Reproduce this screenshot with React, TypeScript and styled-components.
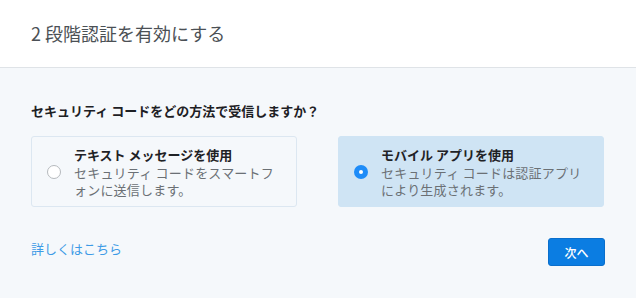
import React, { useState } from "react";
import styled, { createGlobalStyle } from "styled-components";

const GlobalStyle = createGlobalStyle`
    * {
        box-sizing: border-box;
    }

    html,
    body {
        margin: 0;
        padding: 0;
        background: #f5f8fb;
        font-family: "Noto Sans CJK JP", "Noto Sans", sans-serif;
    }
`;

const Dialog = styled.div`
    width: 636px;
    height: 298px;
    background: #f5f8fb;
    display: flex;
    flex-direction: column;
`;

const Header = styled.div`
    height: 68px;
    background: #ffffff;
    border-bottom: 1px solid #dfe3e7;
    display: flex;
    align-items: center;
    padding: 0 31px 1px;
`;

const Title = styled.h1`
    margin: 0;
    font-size: 18px;
    font-weight: 400;
    color: #4b5055;
    line-height: 24px;
`;

const Body = styled.div`
    padding: 34px 31px 0;
`;

const Question = styled.div`
    font-size: 13px;
    font-weight: 700;
    color: #1d2024;
    line-height: 18px;
`;

const Options = styled.div`
    display: grid;
    grid-template-columns: 266px 266px;
    column-gap: 41px;
    margin-top: 16px;
`;

const Option = styled.label<{ $active: boolean }>`
    display: flex;
    align-items: center;
    height: 71px;
    padding: 0 12px 0 15px;
    border-radius: 3px;
    border: 1px solid ${(p) => (p.$active ? "#cfe4f4" : "#dce7f1")};
    background: ${(p) => (p.$active ? "#cfe4f4" : "#f5f8fb")};
    cursor: pointer;
`;

const Radio = styled.span<{ $checked: boolean }>`
    flex: none;
    width: 14px;
    height: 14px;
    border-radius: 50%;
    border: ${(p) => (p.$checked ? "none" : "1px solid #b5b9bd")};
    background: ${(p) => (p.$checked ? "#1e8cf8" : "#ffffff")};
    display: flex;
    align-items: center;
    justify-content: center;
    margin-right: 13px;

    &::after {
        content: "";
        width: 4px;
        height: 4px;
        border-radius: 50%;
        background: #ffffff;
        display: ${(p) => (p.$checked ? "block" : "none")};
    }
`;

const OptionText = styled.div`
    width: 201px;
    line-break: loose;
`;

const OptionTitle = styled.div`
    font-size: 13px;
    font-weight: 700;
    color: #1f2226;
    line-height: 19px;
`;

const OptionDesc = styled.div`
    font-size: 13px;
    color: #6b7075;
    line-height: 17px;
    letter-spacing: 0.2px;
`;

const Footer = styled.div`
    display: flex;
    align-items: center;
    justify-content: space-between;
    margin-top: 31px;
`;

const Link = styled.a`
    font-size: 13px;
    color: #3d9be6;
    text-decoration: none;
    line-height: 18px;
    margin-top: -6px;
`;

const NextButton = styled.button`
    width: 57px;
    height: 28px;
    border: 1px solid #0a6fcc;
    border-radius: 3px;
    background: #0b7de2;
    color: #ffffff;
    font-family: inherit;
    font-size: 12px;
    font-weight: 500;
    padding: 0;
    cursor: pointer;
`;

const options = [
    {
        id: "sms",
        title: "テキスト メッセージを使用",
        desc: "セキュリティ コードをスマートフォンに送信します。",
    },
    {
        id: "app",
        title: "モバイル アプリを使用",
        desc: "セキュリティ コードは認証アプリにより生成されます。",
    },
];

const App = () => {
    const [selected, setSelected] = useState("app");

    return (
        <Dialog>
            <GlobalStyle />
            <Header>
                <Title>2 段階認証を有効にする</Title>
            </Header>
            <Body>
                <Question>セキュリティ コードをどの方法で受信しますか？</Question>
                <Options>
                    {options.map((o) => (
                        <Option
                            key={o.id}
                            $active={selected === o.id}
                            onClick={() => setSelected(o.id)}
                        >
                            <Radio $checked={selected === o.id} />
                            <OptionText>
                                <OptionTitle>{o.title}</OptionTitle>
                                <OptionDesc>{o.desc}</OptionDesc>
                            </OptionText>
                        </Option>
                    ))}
                </Options>
                <Footer>
                    <Link href="#">詳しくはこちら</Link>
                    <NextButton>次へ</NextButton>
                </Footer>
            </Body>
        </Dialog>
    );
};

export default App;
